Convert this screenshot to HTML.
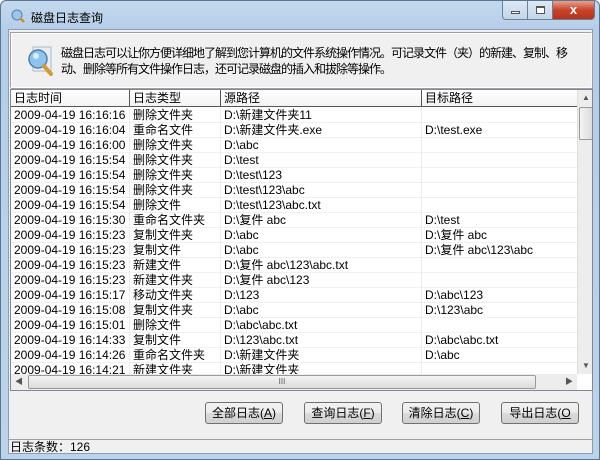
<!DOCTYPE html>
<html><head><meta charset="utf-8"><style>
*{margin:0;padding:0;box-sizing:border-box}
body{width:600px;height:460px;overflow:hidden;font-family:"Liberation Sans","Noto Sans CJK SC",sans-serif;font-size:12px;color:#000;background:#fff}
.win{position:absolute;left:0;top:0;width:600px;height:460px;border-radius:6px 6px 0 0;background:linear-gradient(#c4d9ee,#b4cde8 30px,#bcd3ea);border:1px solid #5a7591}
.title{position:absolute;left:30px;top:8px;font-size:12px;color:#000}
.client{position:absolute;left:7px;top:28px;width:585px;height:425px;background:#f0f0f0;border:1px solid #8a9db3}
.groove{position:absolute;left:1px;top:2px;width:582px;height:56px;border:1px solid #a0a0a0;border-right-color:#fff;border-bottom-color:#fff;box-shadow:inset 1px 1px 0 #fff,1px 1px 0 #a0a0a0}
.desc{position:absolute;left:52px;top:15px;font-size:12px;line-height:16px;width:540px;letter-spacing:-1px;white-space:nowrap}
.list{position:absolute;left:1px;top:59px;width:583px;height:302px;background:#fff;border:1px solid #828790;overflow:hidden}
.hdr{position:absolute;left:0;top:0;height:17px;width:566px;background:linear-gradient(#fff,#f3f3f3);border-bottom:1px solid #555;z-index:2}
.hdr div{position:absolute;top:0;height:16px;line-height:16px;padding-left:3px;border-right:1px solid #555}
.row{position:absolute;left:0;height:15px;width:566px;border-bottom:1px solid #f0f0f0;line-height:14px}
.row span{position:absolute;top:0;padding-left:3px;white-space:nowrap;height:15px;border-right:1px solid #ececec}
.vs{position:absolute;left:566px;top:0;width:16px;height:284px;background:#ededed;border-left:1px solid #e0e0e0;z-index:2}
.hs{position:absolute;left:0;top:284px;width:566px;height:16px;background:#ededed;z-index:2}
.btn{position:absolute;top:372px;width:78px;height:22px;border:1px solid #707070;border-radius:3px;background:linear-gradient(#f2f2f2,#ebebeb 50%,#dcdcdc 50%,#cfcfcf);text-align:center;line-height:20px;font-size:12px}
.status{position:absolute;left:0;top:409px;width:583px;height:15px;border-top:1px solid #a0a0a0;line-height:15px;padding-left:1px}
.cb{position:absolute;top:0;height:19px;border:1px solid #6d7f95;border-top:none}
</style></head><body>
<div class="win">
<svg style="position:absolute;left:9px;top:7px" width="16" height="16"><circle cx="7" cy="7" r="5" fill="#9cc6ea" stroke="#5a80a8"/><line x1="10" y1="10" x2="14" y2="14" stroke="#c89030" stroke-width="2.5"/></svg>
<div class="title">磁盘日志查询</div>
<div class="cb" style="left:501px;width:26px;border-radius:0 0 0 4px;background:linear-gradient(#dde9f5,#c2d5ea)"><div style="position:absolute;left:8px;top:10px;width:9px;height:3px;border:1px solid #555;background:#fff"></div></div>
<div class="cb" style="left:526px;width:26px;background:linear-gradient(#dde9f5,#c2d5ea)"><div style="position:absolute;left:8px;top:5px;width:9px;height:8px;border:1px solid #555;border-top-width:2px;background:#fff"></div></div>
<div class="cb" style="left:551px;width:43px;border-radius:0 0 4px 0;background:linear-gradient(#e8a18f,#c7442a 50%,#b8321c);color:#fff;text-align:center;font-weight:bold;line-height:17px;font-size:13px">x</div>
<div class="client">
<div class="groove"></div>
<svg style="position:absolute;left:16px;top:14px" width="32" height="36"><rect x="8" y="3" width="18" height="24" fill="#e8edf3" stroke="#b0b8c4"/><circle cx="13" cy="15" r="9" fill="#8fc2ec" stroke="#4f7fae" stroke-width="1.5"/><circle cx="11" cy="12" r="3" fill="#d8ecfa"/><line x1="19" y1="22" x2="26" y2="30" stroke="#d49a38" stroke-width="4" stroke-linecap="round"/></svg>
<div class="desc">磁盘日志可以让你方便详细地了解到您计算机的文件系统操作情况。可记录文件（夹）的新建、复制、移<br>动、删除等所有文件操作日志，还可记录磁盘的插入和拔除等操作。</div>
<div class="list">
<div class="hdr"><div style="left:0;width:119px">日志时间</div><div style="left:119px;width:91px">日志类型</div><div style="left:210px;width:201px">源路径</div><div style="left:411px;width:156px;border:none">目标路径</div></div>
<div id="rows"></div>
<div class="vs"><div style="position:absolute;left:1px;top:0;width:14px;height:16px;text-align:center;font-size:8px;line-height:16px;color:#555">▲</div><div style="position:absolute;left:1px;top:17px;width:14px;height:33px;border:1px solid #999;border-radius:2px;background:linear-gradient(90deg,#f4f4f4,#dcdcdc)"></div><div style="position:absolute;left:1px;top:268px;width:14px;height:16px;text-align:center;font-size:8px;line-height:16px;color:#555">▼</div></div>
<div class="hs"><div style="position:absolute;left:0;top:0;width:16px;font-size:8px;line-height:16px;text-align:center;color:#555">◀</div><div style="position:absolute;left:17px;top:1px;width:508px;height:14px;border:1px solid #999;border-radius:2px;background:linear-gradient(#f4f4f4,#dcdcdc);text-align:center;font-size:8px;line-height:12px;color:#555">III</div><div style="position:absolute;left:550px;top:0;width:16px;font-size:8px;line-height:16px;text-align:center;color:#555">▶</div></div>
</div>
<div class="btn" style="left:196px">全部日志(<u>A</u>)</div>
<div class="btn" style="left:295px">查询日志(<u>F</u>)</div>
<div class="btn" style="left:393px">清除日志(<u>C</u>)</div>
<div class="btn" style="left:492px">导出日志(<u>O</u></div>
<div class="status">日志条数：126</div>
</div>
</div>
<script>
var d=[["16:16:16","删除文件夹","D:\\新建文件夹11",""],["16:16:04","重命名文件","D:\\新建文件夹.exe","D:\\test.exe"],["16:16:00","删除文件夹","D:\\abc",""],["16:15:54","删除文件夹","D:\\test",""],["16:15:54","删除文件夹","D:\\test\\123",""],["16:15:54","删除文件夹","D:\\test\\123\\abc",""],["16:15:54","删除文件","D:\\test\\123\\abc.txt",""],["16:15:30","重命名文件夹","D:\\复件 abc","D:\\test"],["16:15:23","复制文件夹","D:\\abc","D:\\复件 abc"],["16:15:23","复制文件","D:\\abc","D:\\复件 abc\\123\\abc"],["16:15:23","新建文件","D:\\复件 abc\\123\\abc.txt",""],["16:15:23","新建文件夹","D:\\复件 abc\\123",""],["16:15:17","移动文件夹","D:\\123","D:\\abc\\123"],["16:15:08","复制文件夹","D:\\abc","D:\\123\\abc"],["16:15:01","删除文件","D:\\abc\\abc.txt",""],["16:14:33","复制文件","D:\\123\\abc.txt","D:\\abc\\abc.txt"],["16:14:26","重命名文件夹","D:\\新建文件夹","D:\\abc"],["16:14:21","新建文件夹","D:\\新建文件夹",""]];
var h="";d.forEach(function(r,i){h+='<div class="row" style="top:'+(18+i*15)+'px"><span style="left:0;width:119px">2009-04-19 '+r[0]+'</span><span style="left:119px;width:91px">'+r[1]+'</span><span style="left:210px;width:201px">'+r[2]+'</span><span style="left:411px;border:none">'+r[3]+'</span></div>'});
document.getElementById("rows").innerHTML=h;
</script>
</body></html>
